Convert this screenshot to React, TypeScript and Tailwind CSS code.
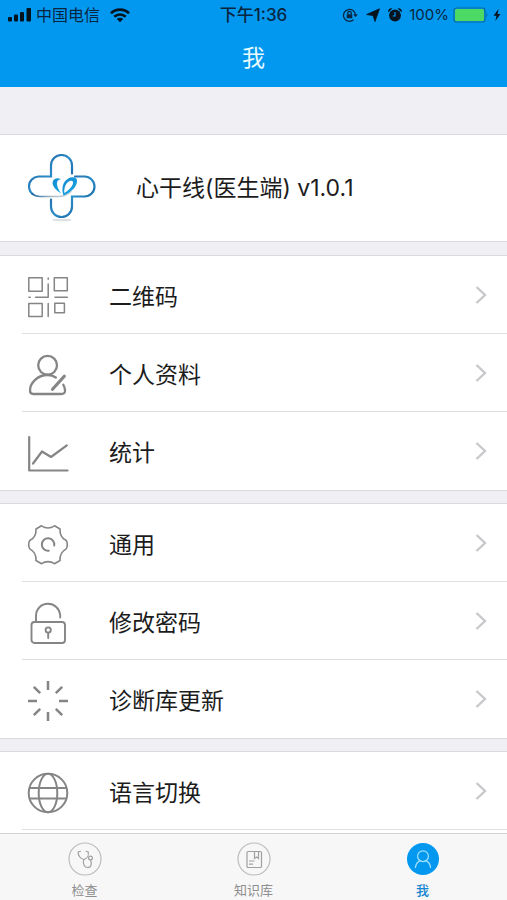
import type { ReactNode } from 'react'
import { clsx } from 'clsx'

interface MenuItem {
  label: string
  icon: ReactNode
}

interface TabItem {
  label: string
  icon: ReactNode
  active?: boolean
}

function RowIcon({ children, width = 2 }: { children: ReactNode; width?: number }) {
  return (
    <svg
      viewBox="0 0 40 40"
      className="size-10 shrink-0 overflow-visible text-[#858585]"
      fill="none"
      stroke="currentColor"
      strokeWidth={width}
      strokeLinecap="round"
      strokeLinejoin="round"
      aria-hidden="true"
    >
      {children}
    </svg>
  )
}

const groups: MenuItem[][] = [
  [
    {
      label: '二维码',
      icon: (
        <RowIcon width={1.5}>
          <path d="M.8.8h13.4v13.4H.8zM26.3.8h13v13h-13zM.8 26.5h13.4v13H.8zM26.8 26.2h9.6v9.6h-9.6z" />
          <path d="M20.2 1v1.2M20.2 7v13.2H7.5M1 20.2h1.2M27 20.2h12.4M20.2 26.5v13" />
        </RowIcon>
      ),
    },
    {
      label: '个人资料',
      icon: (
        <RowIcon width={2.3}>
          <circle cx="19.6" cy="10.3" r="9.4" />
          <path d="M27.8 22.5C25.5 20.8 22.7 20 19.6 20 9 20 2 28.5 2 35.500c0 2.400 1 3.500 3.200 3.500H33c3.200 0 4.300-1.300 4-4-.2-2-.8-3.700-1.700-5.300" />
          <path d="M36.300 21.200 24.500 34.300" strokeWidth="3.200" />
        </RowIcon>
      ),
    },
    {
      label: '统计',
      icon: (
        <RowIcon width={2.2}>
          <path d="M1.200 4v33.500h38.400" />
          <path d="M5 30.500 14 18.500l9 5.500 15.800-11.700" />
        </RowIcon>
      ),
    },
  ],
  [
    {
      label: '通用',
      icon: (
        <RowIcon width={1.6}>
          <path d="M13.500.8Q20 5.200 26.500.8L32 4Q31.500 12.200 38.200 15.500Q39.300 17 39.300 19.700Q39.300 22.400 38.200 23.900Q31.500 27.500 32 35.500L26.500 38.700Q20 34.500 13.500 38.700L8 35.500Q8.500 27.500 1.800 23.900Q.7 22.400.7 19.700Q.7 17 1.800 15.500Q8.500 12.200 8 4Z" />
          <path d="M20.800 25.700a6.200 6.200 0 1 1 5.400-5.200" strokeWidth="2" />
        </RowIcon>
      ),
    },
    {
      label: '修改密码',
      icon: (
        <RowIcon width={1.9}>
          <rect x="3.500" y="19" width="33.500" height="21" rx="3" />
          <path d="M8 18.500V13C8 6 13.200.8 20 .8c6.500 0 11.500 4.700 12.200 11.200v2.500" />
          <circle cx="20.200" cy="27" r="2.600" />
          <path d="M20.200 29.800V35" />
        </RowIcon>
      ),
    },
    {
      label: '诊断库更新',
      icon: (
        <RowIcon width={2.5}>
          <g strokeLinecap="butt">
            <path d="M20 0v9M20 31v9M0 20h9M31 20h9M5.800 5.800l6.400 6.400M27.800 27.800l6.400 6.400M5.800 34.200l6.400-6.400M27.800 12.200l6.400-6.400" />
          </g>
        </RowIcon>
      ),
    },
  ],
  [
    {
      label: '语言切换',
      icon: (
        <RowIcon width={2}>
          <circle cx="20" cy="20" r="19.300" />
          <ellipse cx="20" cy="20" rx="9.300" ry="19.300" />
          <path d="M1.800 15h36.400M1.800 25.500h36.400" />
        </RowIcon>
      ),
    },
  ],
]

const tabs: TabItem[] = [
  {
    label: '检查',
    icon: (
      <>
        <path d="M11.500 8.300 9.200 9c-.4 3.200 2.200 7 5.800 7.500 3.200-1.200 5-4.300 4.200-7.500l-2-.7M15 16.500c-1.700 3 0 8 3.800 8 3.500 0 4.200-4 2.700-7.500" />
        <circle cx="21.500" cy="15" r="1.900" />
      </>
    ),
  },
  {
    label: '知识库',
    icon: (
      <>
        <rect x="9" y="8.500" width="14.500" height="16" rx="1" />
        <path d="M16.500 8.500v7l2-1.600 2 1.600v-7M11.500 18h4.500M11.500 21.200h3" />
      </>
    ),
  },
  {
    label: '我',
    active: true,
    icon: (
      <>
        <circle cx="16" cy="13.200" r="5.400" />
        <path d="M8.500 24.500c.4-3.700 2.500-6 5.200-6.800M23.500 24.500c-.4-3.700-2.500-6-5.200-6.800" />
      </>
    ),
  },
]

function StatusBar() {
  return (
    <div className="grid h-[30px] grid-cols-[1fr_auto_1fr] items-center px-1.5 text-base leading-5 text-[#08263f]">
      <div className="flex items-center pl-0.5">
        <svg viewBox="0 0 24 14" className="mr-1 h-[14px] w-6" fill="#05131f" aria-hidden="true">
          <rect x="0" y="9" width="4" height="4.500" rx="1" />
          <rect x="6" y="6.500" width="4" height="7" rx="1" />
          <rect x="12" y="4" width="4" height="9.500" rx="1" />
          <rect x="18.500" y="0" width="4.500" height="13.500" rx="1" />
        </svg>
        <span>中国电信</span>
        <svg viewBox="0 0 20 15" className="ml-2.5 h-[15px] w-5" fill="none" stroke="#05131f" strokeWidth="2.600" aria-hidden="true">
          <path d="M1 5.200a13 13 0 0 1 18 0M4.300 8.800a8.200 8.200 0 0 1 11.400 0" />
          <path d="M10 14.200 6.800 11a4.600 4.600 0 0 1 6.400 0z" fill="#05131f" stroke="none" />
        </svg>
      </div>
      <span className="text-[17px] font-medium">下午1:36</span>
      <div className="flex items-center justify-end">
        <svg viewBox="0 0 16 16" className="size-4" fill="none" stroke="currentColor" strokeWidth="1.300" aria-hidden="true">
          <path d="M11.500 12.800A6 6 0 1 1 13.500 8" />
          <path d="M11.300 7.300h4.400l-2.200 3z" fill="currentColor" stroke="none" />
          <rect x="4.700" y="7.200" width="5.600" height="4" rx=".5" fill="currentColor" stroke="none" />
          <path d="M5.800 7.500V6a1.700 1.700 0 0 1 3.400 0v1.500" />
        </svg>
        <svg viewBox="0 0 14 14" className="ml-2 size-[14px]" fill="#05131f" aria-hidden="true">
          <path d="M13.500.8 9 13.500 7 7.500.6 6.500z" stroke="#05131f" strokeWidth=".8" strokeLinejoin="round" />
        </svg>
        <svg viewBox="0 0 14 14" className="ml-2 size-[14px]" fill="#05131f" aria-hidden="true">
          <circle cx="7" cy="7.500" r="5.900" />
          <path d="M.3 4.200A3 3 0 0 1 4.500.6zM13.700 4.200A3 3 0 0 0 9.500.6z" />
          <path d="M7 4v4H4.700" fill="none" stroke="#0398ef" strokeWidth="1.200" />
        </svg>
        <span className="ml-[7px] text-[15px]">100%</span>
        <svg viewBox="0 0 36 16" className="ml-1 h-4 w-9" aria-hidden="true">
          <rect x="1" y="1" width="31" height="14" rx="2.500" fill="none" stroke="#0a6a9e" strokeWidth="1.200" />
          <rect x="2" y="2" width="29" height="12" rx="1.500" fill="#4cd964" />
          <path d="M33.500 5.500q2 2.500 0 5z" fill="#0a6a9e" />
        </svg>
        <svg viewBox="0 0 8 12" className="ml-1 h-3 w-2" fill="#05131f" aria-hidden="true">
          <path d="M5.500 0 .5 6.800h3L2.300 12l5.200-7H4.600z" />
        </svg>
      </div>
    </div>
  )
}

function Logo() {
  return (
    <svg viewBox="0 0 68 68" className="size-[68px] shrink-0" fill="none" strokeLinecap="round" role="img" aria-label="心干线">
      <defs>
        <linearGradient id="cross" x1="0" y1="0" x2="1" y2="1">
          <stop offset="0" stopColor="#1d5590" />
          <stop offset=".5" stopColor="#2a8cc9" />
          <stop offset="1" stopColor="#14508c" />
        </linearGradient>
        <linearGradient id="fade" gradientUnits="userSpaceOnUse" x1="4" y1="0" x2="43" y2="0">
          <stop offset="0" stopColor="#2067a2" />
          <stop offset=".5" stopColor="#a9bcc8" />
          <stop offset="1" stopColor="#cfd8de" />
        </linearGradient>
        <linearGradient id="heart" x1="0" y1="0" x2="1" y2="1">
          <stop offset="0" stopColor="#1488cf" />
          <stop offset="1" stopColor="#19a9e4" />
        </linearGradient>
      </defs>
      <ellipse cx="34" cy="66" rx="10" ry="1.300" fill="#dde1e4" />
      <g stroke="url(#cross)" strokeWidth="2.200">
        <path d="M44 19.500V11.500a10.500 10.500 0 0 0-21 0V22.500H10.500a9.800 9.800 0 0 0-9.500 9.800c0 3.500 1.500 6 3.500 7.700" />
        <path d="M47 22.500h9.500a10 10 0 0 1 0 20H44v10a10.500 10.500 0 0 1-21 0v-7" />
      </g>
      <path d="M4 39.700C6.500 42 9 42.500 12 42.500h18c6 0 10-2 13-5" stroke="url(#fade)" strokeWidth="1.700" />
      <path
        d="M33 39.500C27 35.500 24 31.500 24.700 28c.8-3.600 5-4.600 8.300-2.800-3.300.3-4.500 2.600-3.800 6 .5 3 2 5.500 3.800 8.300z"
        fill="url(#heart)"
      />
      <path
        d="M35.500 41.500C33 34 35 27.500 40 24.700c4-2.300 8.500-1.700 9 1.300C50 32 43 38.500 35.500 41.500zm.8-2.500c5.700-3.500 9.200-8 8.700-11-1-3.500-9.500 0-8.700 11z"
        fill="url(#heart)"
        fillRule="evenodd"
      />
    </svg>
  )
}

function MenuRow({ item, ruled }: { item: MenuItem; ruled: boolean }) {
  return (
    <li className={clsx('border-b', ruled ? 'border-[#dfdfe3]' : 'border-transparent')}>
      <button type="button" className="flex h-[77px] w-full items-center pl-1.5 pr-5 pt-1 text-left">
        {item.icon}
        <span className="ml-[41px] flex-1 text-[23px] leading-8">{item.label}</span>
        <svg viewBox="0 0 12 18" className="mb-1 h-[18px] w-3" fill="none" stroke="#c7c7cc" strokeWidth="2.400" aria-hidden="true">
          <path d="M1.500 1 10 9l-8.500 8" />
        </svg>
      </button>
    </li>
  )
}

function TabBar() {
  return (
    <nav className="grid h-[67px] shrink-0 grid-cols-3 border-t border-[#d2d2d4] bg-[#f7f7f7]">
      {tabs.map((tab) => (
        <a
          key={tab.label}
          href="#"
          aria-current={tab.active ? 'page' : undefined}
          className={clsx(
            'flex flex-col items-center pt-[9px] text-[13px]',
            tab.active ? 'font-medium text-[#1384cf]' : 'text-[#8e8e8e]',
          )}
        >
          <svg
            viewBox="0 0 32 32"
            className="size-8 overflow-visible"
            fill="none"
            stroke={tab.active ? '#a5e3ff' : '#a0a0a0'}
            strokeWidth="1.200"
            strokeLinecap="round"
            aria-hidden="true"
          >
            <circle cx="16" cy="16" r="16" fill={tab.active ? '#0398ef' : 'none'} stroke={tab.active ? 'none' : '#bcbcbc'} />
            {tab.icon}
          </svg>
          <span className="mt-[5px] leading-5">{tab.label}</span>
        </a>
      ))}
    </nav>
  )
}

export default function App() {
  return (
    <div className="flex h-screen flex-col bg-[#efeff4] font-[Inter,'Noto_Sans_CJK_SC',sans-serif] text-[#1c1c1c]">
      <header className="shrink-0 bg-[#0398ef]">
        <StatusBar />
        <h1 className="h-[57px] pt-3 text-center text-[23px] leading-8 text-[#e8fbff]">我</h1>
      </header>
      <main className="flex min-h-0 flex-1 flex-col overflow-hidden pt-[47px]">
        <section className="flex h-[108px] shrink-0 items-center border-y border-[#dadade] bg-white pl-7">
          <Logo />
          <p className="ml-10 text-[23px] leading-8">心干线(医生端) v1.0.1</p>
        </section>
        {groups.map((group, index) => {
          const lastGroup = index === groups.length - 1
          return (
            <ul
              key={index}
              className="mt-[13px] shrink-0 border-t border-[#dadade] bg-white pl-[22px] shadow-[0_1px_0_#dadade] last:grow"
            >
              {group.map((item, row) => (
                <MenuRow key={item.label} item={item} ruled={lastGroup || row < group.length - 1} />
              ))}
            </ul>
          )
        })}
      </main>
      <TabBar />
    </div>
  )
}
